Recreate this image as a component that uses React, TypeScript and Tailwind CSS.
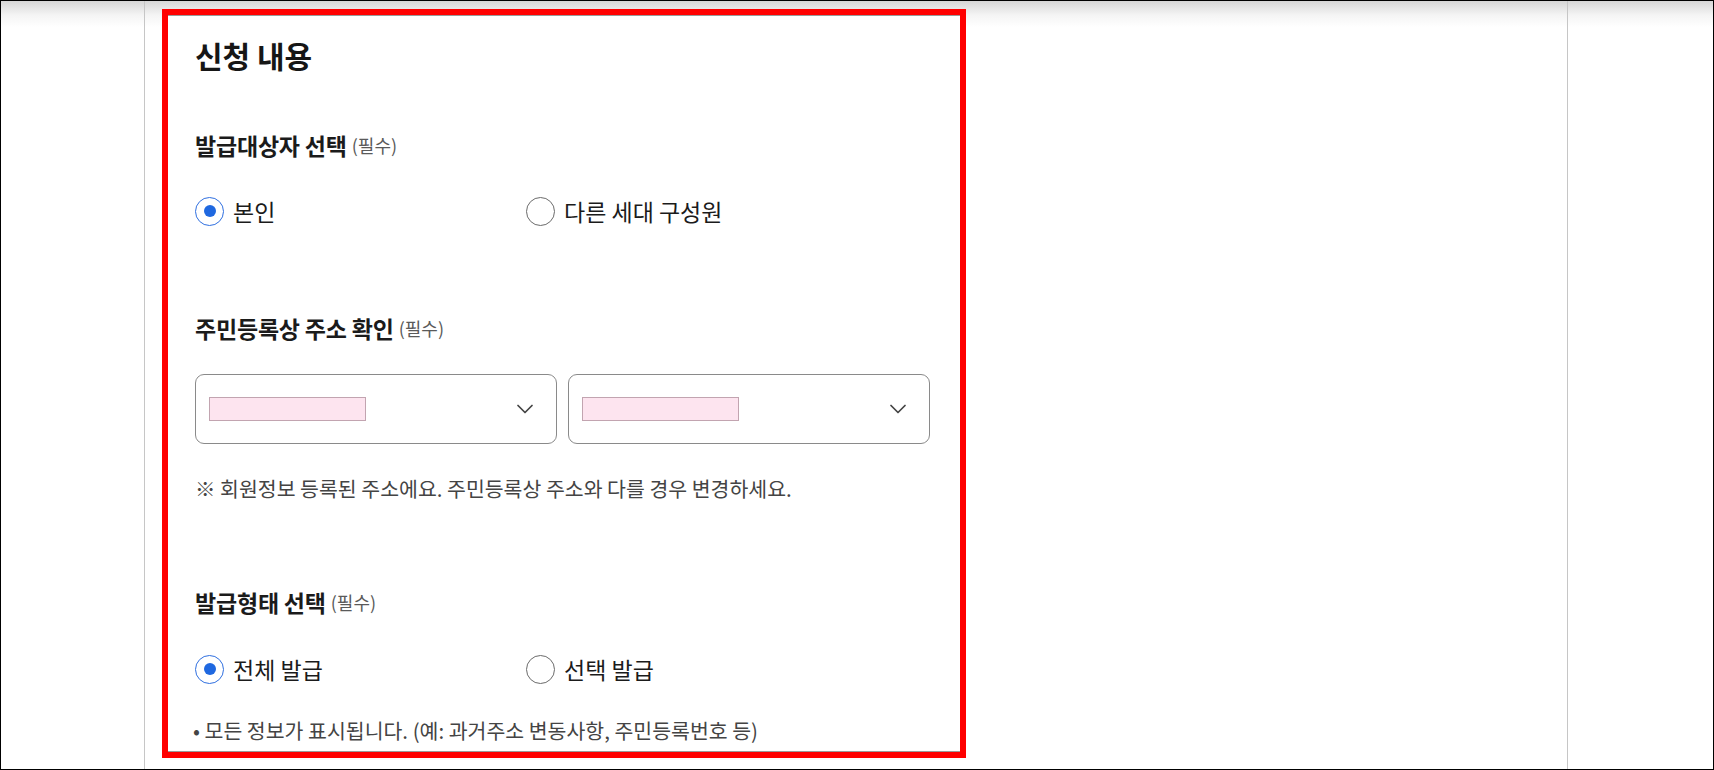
import React, { useState } from 'react';
import { ChevronDown } from 'lucide-react';

const font = { fontFamily: '"Noto Sans CJK KR", "Noto Sans", sans-serif' };

interface RadioProps {
    label: string;
    checked: boolean;
    onClick: () => void;
}

const Radio: React.FC<RadioProps> = ({ label, checked, onClick }) => (
    <button onClick={onClick} className="w-[331px] h-[30px] flex items-center gap-[9px] text-left">
        <span
            className={`w-[29px] h-[29px] rounded-full flex items-center justify-center bg-white ${checked ? 'border-[1.5px] border-[#2f6fe0]' : 'border border-[#6b6b6b]'
                }`}
        >
            {checked && <span className="w-[12px] h-[12px] rounded-full bg-[#1f68e0]"></span>}
        </span>
        <span className="text-[23px] leading-[30px] text-[#1b1b1b]">{label}</span>
    </button>
);

const Label: React.FC<{ text: string; className?: string }> = ({ text, className }) => (
    <p className={`h-[28px] flex items-center ${className ?? ''}`}>
        <span className="text-[23px] font-bold text-[#1b1b1b] tracking-[-0.2px]">{text}</span>
        <span className="ml-[5px] text-[18px] text-[#5a5a5a]">(필수)</span>
    </p>
);

const AddressSelect: React.FC = () => (
    <div className="w-[362px] h-[70px] rounded-[9px] border border-[#8a8a8a] bg-white flex items-center pl-[13px] pr-[17px]">
        <div className="w-[157px] h-[24px] bg-[#fde4ef] border border-[#c2a4b0]"></div>
        <div className="flex-1"></div>
        <ChevronDown size={28} strokeWidth={1.5} className="text-[#444]" />
    </div>
);

export default function App() {
    const [target, setTarget] = useState<'self' | 'other'>('self');
    const [form, setForm] = useState<'all' | 'select'>('all');

    return (
        <div
            style={font}
            className="w-full h-[770px] border border-black overflow-hidden bg-[linear-gradient(to_bottom,#d6d6d6_0px,#f4f4f4_14px,#ffffff_26px)] flex antialiased"
        >
            {/* left margin */}
            <div className="w-[143px] shrink-0"></div>

            {/* main column */}
            <div className="w-[1424px] shrink-0 border-l border-r border-[#c6c6c6] pl-[17px] pt-[8px]">
                <div className="w-[804px] border-[6px] border-[#ff0000]">
                    <div className="border-t border-b border-[#9a9a9a] pl-[27px] pt-[19px] pb-[8px] bg-white">
                        <h2 className="text-[30px] leading-[40px] font-bold text-[#161616]">신청 내용</h2>

                        {/* 발급대상자 */}
                        <Label text="발급대상자 선택" className="mt-[56px]" />
                        <div className="flex mt-[37px]">
                            <Radio label="본인" checked={target === 'self'} onClick={() => setTarget('self')} />
                            <Radio label="다른 세대 구성원" checked={target === 'other'} onClick={() => setTarget('other')} />
                        </div>

                        {/* 주소 확인 */}
                        <Label text="주민등록상 주소 확인" className="mt-[88px]" />
                        <div className="flex gap-[11px] mt-[32px]">
                            <AddressSelect />
                            <AddressSelect />
                        </div>
                        <p className="mt-[31px] text-[20.5px] leading-[26px] text-[#444]">
                            ※ 회원정보 등록된 주소에요. 주민등록상 주소와 다를 경우 변경하세요.
                        </p>

                        {/* 발급형태 */}
                        <Label text="발급형태 선택" className="mt-[87px]" />
                        <div className="flex mt-[38px]">
                            <Radio label="전체 발급" checked={form === 'all'} onClick={() => setForm('all')} />
                            <Radio label="선택 발급" checked={form === 'select'} onClick={() => setForm('select')} />
                        </div>
                        <p className="mt-[33px] -ml-[2px] text-[20.5px] leading-[26px] text-[#444]">
                            • 모든 정보가 표시됩니다. (예: 과거주소 변동사항, 주민등록번호 등)
                        </p>
                    </div>
                </div>
            </div>
        </div>
    );
}
